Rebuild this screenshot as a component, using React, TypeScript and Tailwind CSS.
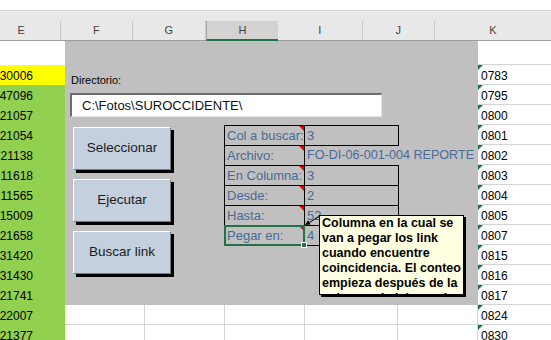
import React from "react";

const eVals = ["30006", "47096", "21057", "21054", "21138", "11618", "11565", "15009", "21658", "31420", "31430", "21741", "22007", "21377"];
const kVals = ["0783", "0795", "0800", "0801", "0802", "0803", "0804", "0805", "0807", "0815", "0816", "0817", "0824", "0830"];

const fields = [
  { label: "Col a buscar:", value: "3" },
  { label: "Archivo:", value: "FO-DI-06-001-004 REPORTE DE ACTIVIDADES", spill: true },
  { label: "En Columna:", value: "3" },
  { label: "Desde:", value: "2" },
  { label: "Hasta:", value: "52" },
  { label: "Pegar en:", value: "4", selected: true },
];

const tipLines = [
  "Columna en la cual se",
  "van a pegar los link",
  "cuando encuentre",
  "coincidencia. El conteo",
  "empieza después de la",
  "columna de búsqueda.",
];

function MacroButton({ text }: { text: string }) {
  return (
    <button className="w-[98px] h-[43px] bg-[#c4d0dd] border border-t-white border-l-white border-b-[#7a7a7a] border-r-[#7a7a7a] shadow-[3px_3px_0_#000] text-[13.5px] text-[#1b1b1b] flex items-center justify-center">
      {text}
    </button>
  );
}

export default function App() {
  return (
    <div className="w-[551px] h-[340px] overflow-hidden bg-white font-['Liberation_Sans',sans-serif] select-none">
      {/* top strip */}
      <div className="h-[11px] bg-white border-b border-[#d4d4d4]" />
      <div className="h-[10px] bg-[#e8e8e8]" />

      {/* column headers */}
      <div className="h-[20px] flex bg-[#e8e8e8] border-b border-[#9e9e9e] text-[11px] text-[#444]">
        <div className="w-[65px] flex items-center justify-center pr-[17px] border-r border-[#cacaca]">E</div>
        <div className="w-[80px] flex items-center justify-center border-r border-[#cacaca]">F</div>
        <div className="w-[80px] flex items-center justify-center border-r border-[#cacaca]">G</div>
        <div className="w-[80px] flex items-center justify-center bg-[#d3d3d3] border-l border-[#a8a8a8] border-b-2 border-b-[#217346] -mb-[1px]">H</div>
        <div className="w-[93px] flex items-center justify-center border-r border-[#cacaca]">I</div>
        <div className="w-[80px] flex items-center justify-center border-r border-[#cacaca]">J</div>
        <div className="w-[128px] flex items-center justify-center">K</div>
      </div>

      {/* sheet body */}
      <div className="flex text-[12px] text-black">
        {/* column E */}
        <div className="w-[65px] shrink-0">
          <div className="h-[24px] bg-white" />
          {eVals.map((v, i) => (
            <div key={v + i} className={`h-[20px] ${i === 0 ? "bg-[#ffff00]" : "bg-[#92d050]"}`}>
              <div className="w-[34px] h-[20px] flex justify-end pr-[1px] leading-[23px] whitespace-nowrap">
                {v}
              </div>
            </div>
          ))}
        </div>

        {/* middle: grey panel over F..J */}
        <div className="w-[413px] shrink-0">
          <div className="relative h-[264px] bg-[#c0c0c0] overflow-hidden">
            <div className="pl-[6px] mt-[33px] h-[13px] text-[11px] leading-[13px] text-black">Directorio:</div>
            <div className="ml-[5px] mt-[6px] w-[312px] h-[24px] bg-white border-t-2 border-l-2 border-b border-r border-t-[#6e6e6e] border-l-[#6e6e6e] border-b-[#e4e4e4] border-r-[#e4e4e4] pl-[10px] text-[13px] leading-[21px] text-[#111]">
              C:\Fotos\SUROCCIDENTE\
            </div>

            <div className="flex items-start mt-[8px]">
              <div className="ml-[8px] mt-[2px] flex flex-col gap-[9px]">
                <MacroButton text="Seleccionar" />
                <MacroButton text="Ejecutar" />
                <MacroButton text="Buscar link" />
              </div>

              <div className="ml-[53px] border-t border-l border-black text-[13px] text-[#4a6a98]">
                {fields.map((f) => (
                  <div key={f.label} className="flex h-[20px]">
                    <div className="relative w-[80px] h-[20px] border-r border-b border-black pl-[2px] leading-[19px] whitespace-nowrap">
                      {f.label}
                      <div className="absolute top-0 right-0 w-[5px] h-[5px] bg-[#e00000] [clip-path:polygon(0_0,100%_0,100%_100%)]" />
                      {f.selected && (
                        <div className="absolute -left-[1px] -top-[1px] -right-[1px] -bottom-[1px] border-2 border-[#217346]">
                          <div className="absolute -right-[4px] -bottom-[4px] w-[6px] h-[6px] bg-[#217346] border border-white" />
                        </div>
                      )}
                    </div>
                    <div className={`w-[94px] h-[20px] border-b border-black pl-[2px] leading-[19px] whitespace-nowrap ${f.spill ? "" : "border-r"}`}>
                      {f.spill ? (
                        <div className="w-[171px] overflow-hidden text-[12.6px]">{f.value}</div>
                      ) : (
                        f.value
                      )}
                    </div>
                  </div>
                ))}
              </div>
            </div>

            {/* comment arrow */}
            <svg className="absolute left-[236px] top-[172px]" width="22" height="16" viewBox="0 0 22 16">
              <line x1="6" y1="10.8" x2="19" y2="3" stroke="#000" strokeWidth="1" />
              <polygon points="4,12 9.6,11.6 7,7.3" fill="#000" />
            </svg>

            {/* comment box */}
            <div className="absolute left-[254px] top-[174px] w-[145px] h-[80px] bg-[#ffffe1] border border-black shadow-[2px_2px_0_#000] overflow-hidden pl-[2px] text-[12.5px] font-bold leading-[15px] text-black">
              {tipLines.map((l) => (
                <div key={l} className="whitespace-nowrap">{l}</div>
              ))}
            </div>
          </div>

          {/* plain cells below the panel */}
          {[0, 1].map((r) => (
            <div key={r} className="flex h-[20px] border-b border-[#d4d4d4]">
              <div className="w-[80px] border-r border-[#d4d4d4]" />
              <div className="w-[80px] border-r border-[#d4d4d4]" />
              <div className="w-[80px] border-r border-[#d4d4d4]" />
              <div className="w-[93px] border-r border-[#d4d4d4]" />
              <div className="w-[80px] border-r border-[#d4d4d4]" />
            </div>
          ))}
        </div>

        {/* column K */}
        <div className="flex-1">
          <div className="h-[24px] border-b border-[#d4d4d4]" />
          {kVals.map((v) => (
            <div key={v} className="relative h-[20px] border-b border-[#d4d4d4] pl-[3px] leading-[23px]">
              <div className="absolute top-0 left-0 w-[5px] h-[5px] bg-[#1e7145] [clip-path:polygon(0_0,100%_0,0_100%)]" />
              {v}
            </div>
          ))}
        </div>
      </div>
    </div>
  );
}
